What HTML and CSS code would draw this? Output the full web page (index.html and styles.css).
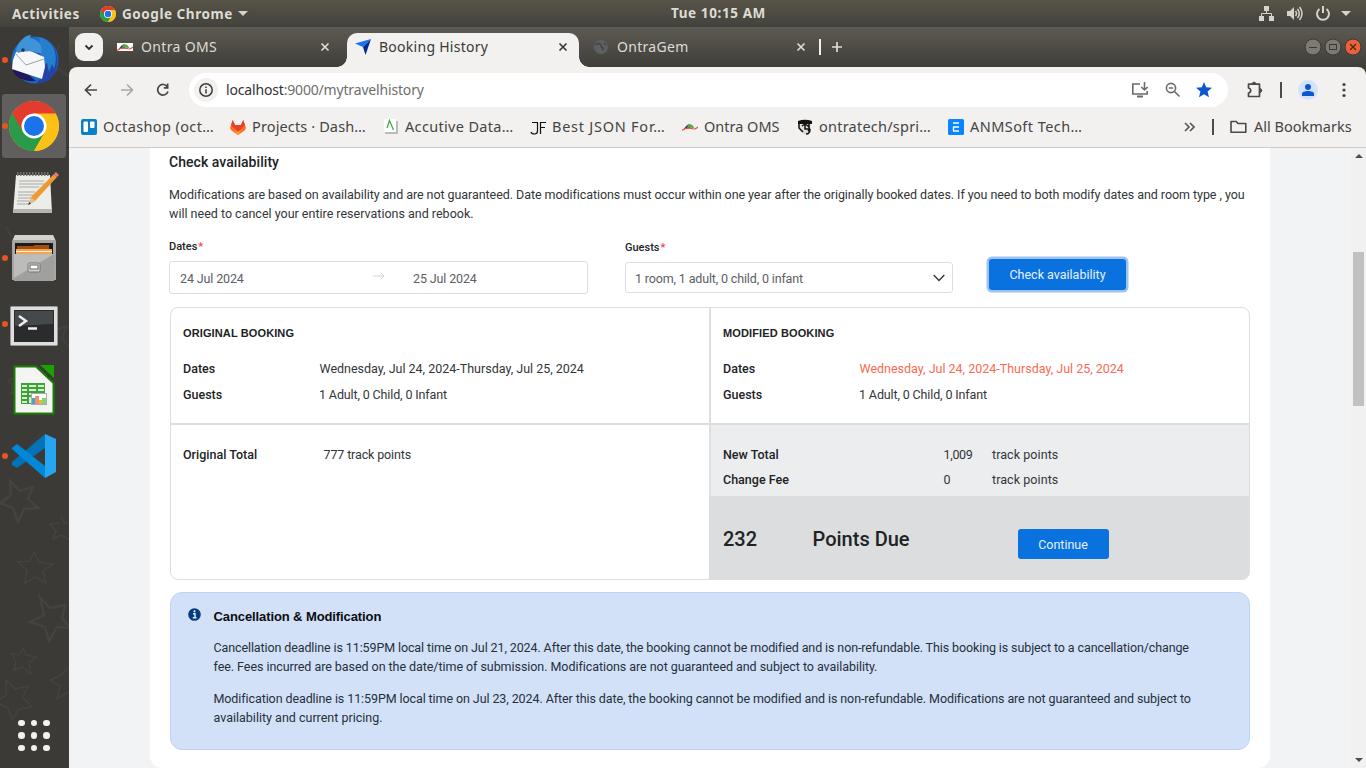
FILE: index.html
```html
<!DOCTYPE html>
<html lang="en">
<head>
<meta charset="utf-8">
<title>Booking History</title>
<link rel="stylesheet" href="styles.css">
</head>
<body>
<svg class="defs" width="0" height="0">
  <defs>
    <symbol id="chrome" viewBox="0 0 50 50">
      <circle cx="25" cy="25" r="25" fill="#fbc116"/>
      <path d="M25 25 3.35 12.5A25 25 0 0 0 25 50L36 31z" fill="#2a9b48"/>
      <path d="M25 25 36 31 25 50A25 25 0 0 0 46.65 12.5H25z" fill="#fbc116"/>
      <path d="M3.35 12.5A25 25 0 0 1 46.65 12.5H25L14.2 31z" fill="#e33b2e"/>
      <circle cx="25" cy="25" r="12.5" fill="#fff"/>
      <circle cx="25" cy="25" r="10" fill="#1a73e8"/>
    </symbol>
    <symbol id="close" viewBox="0 0 10 10"><path d="M1.500 1.500 8.500 8.500M8.500 1.500 1.500 8.500" stroke="currentColor" stroke-width="1.700"/></symbol>
    <symbol id="ontra" viewBox="0 0 16 8">
      <path d="M1 6.500C3 5.500 4 1.200 7.500 1.200L8 5z" fill="#2b3f78"/>
      <path d="M5 4.500C6 0 10 0 12.500 5z" fill="#58a742"/>
      <path d="M0 7.500C4 4 8 5 11 5.800 14 6.500 14.500 5 16 4" fill="none" stroke="#e0524d" stroke-width="1.100"/>
    </symbol>
  </defs>
</svg>

<header class="topbar">
  <span class="activities">Activities</span>
  <svg class="app-icon" width="16" height="16"><use href="#chrome"/></svg>
  <span class="app-name">Google Chrome</span>
  <i class="caret"></i>
  <span class="clock">Tue 10:15 AM</span>
  <span class="tray">
    <svg width="16" height="16" fill="#d6d3cd"><path d="M5 0h5v5H5zM0 10h5v5H0zM10 10h5v5h-5z"/><path d="M7.500 5v3M2.500 10V7.500h10V10" fill="none" stroke="#d6d3cd"/></svg>
    <svg width="16" height="16" fill="none" stroke="#d6d3cd" stroke-width="1.500"><path d="M0 5h3l4-4v13L3 10H0z" fill="#d6d3cd" stroke="none"/><path d="M8.500 5q2 2.500 0 5M10.500 3q3.500 4.500 0 9M12.500 1q5 6.500 0 13"/></svg>
    <svg width="16" height="16" fill="none" stroke="#d6d3cd" stroke-width="2"><path d="M4.500 3a6 6 0 1 0 7 0M8 0v7"/></svg>
    <i class="caret"></i>
  </span>
</header>

<div class="desktop">
  <nav class="dock">
    <svg class="dock-pattern" width="69" height="741" fill="none" stroke="#444340" stroke-width="1.500">
      <path d="m10 454 10 10 13-4-5 12 10 9-14 1-6 13-5-14-13-5 11-8z" stroke-width="2.500"/>
      <path d="m34 525 5 10 14 2-10 7 3 12-11-6-10 6 2-13-9-8 12-1z"/>
      <path d="m40 570 10 11 15-3-3 13 8 10-13-1-8 14-4-14-15-5 14-7z" stroke-width="2.500"/>
      <path d="m23 621 3 7 10 2-7 6 2 11-9-7-8 3 2-8-4-8 8 1z"/>
      <path d="m6 653 9 9 13-3-5 11 9 10-13 2-7 11-4-12-13-6 11-7z"/>
      <path d="m61 489 3 7 8 0M69 512l-8-4-8 4 3-8-6-7 10-1M69 640l-8 8-11 5 10 6-3 13 12-8"/>
      <path d="m19 343 3 8 8 1-5 6 3 9-9-4-8 4 2-8-5-6 8-2zM40 300l11 5 16-6-5 13 8 9M60 17l-4 9-12 3 8 7-3 12 10-6 10 8M6 200l5 9 11 0-7 8 4 11-10-4"/>
    </svg>
    <div class="dock-item running">
      <svg width="50" height="50" viewBox="0 0 50 50">
        <circle cx="26" cy="25" r="23.500" fill="#1a6cc8"/>
        <path d="M36 4C48 9 52 27 45 38L49 33C43 46 34 49 27 48L33 42 20 35z" fill="#2443a8"/>
        <path d="M30 2C45 5 50 20 45 34L43 29 40 37 38 28 33 33z" fill="#257fce"/>
        <path d="M4 34 20 40 27 46C16 47 7 43 4 36z" fill="#21185b"/>
        <path d="M7 17 17 14 35 22 36 32 33 44 3 34 4 25z" fill="#f7f7fa"/>
        <path d="m7 19 10 11 18-6" fill="none" stroke="#99a3b0"/>
        <path d="M7 15C10 4 18 0 22 0L21 3C32 5 34 13 32 19 24 15 15 16 9 18z" fill="#3f93d8"/>
        <circle cx="14" cy="15" r="1.800" fill="#243a4a"/>
      </svg>
    </div>
    <div class="dock-item running current"><svg width="50" height="50"><use href="#chrome"/></svg></div>
    <div class="dock-item editor">
      <svg width="48" height="46" viewBox="0 0 48 46">
        <path d="M4 5h34l2 38H1z" fill="#ecece8"/><path d="M1 39h39v4H1z" fill="#b5b5b1"/>
        <path d="M5 4h32" stroke="#75736f" stroke-width="4" stroke-dasharray="1.500 1.500"/>
        <path d="M7 11h25M7 14h27M7 17h20M6 22h17M6 25h19M6 28h15M5 31h12M5 34h13" stroke="#a8a8a5"/>
        <path d="m16 35 3-8L42 4l3 3-22 24z" fill="#ec9a31"/><path d="m42 4 2-2 3 3-2 2z" fill="#e07c80"/><path d="m16 35 3-8 4 4z" fill="#dcc299"/><path d="m16 35 1.500-3 1.500 1.500z" fill="#333"/>
      </svg>
    </div>
    <div class="dock-item running">
      <svg width="44" height="48" viewBox="0 0 44 48">
        <path d="M3 1h38l3 6v39H0V7z" fill="#a6a6a4"/><path d="M3 1h38l2 5H1z" fill="#d2d2d0"/>
        <path d="M3 9h38v11H3z" fill="#1b1b1b"/><path d="M5 12h16l2-1h14v9H5z" fill="#a34d12"/><path d="M4 15h36v5H4z" fill="#f1a451"/><path d="M4 17.500h36" stroke="#fff0d8"/>
        <path d="M2 20h40v27H2z" fill="#a0a09e"/><path d="M2 20h40L2 44z" fill="#bcbcba"/>
        <rect x="16" y="29" width="12" height="9" rx="1.500" fill="#d2d2d0" stroke="#777"/><rect x="18" y="31" width="8" height="4" fill="#fff" stroke="#666"/>
      </svg>
    </div>
    <div class="dock-item running terminal">
      <svg width="48" height="40" viewBox="0 0 48 40">
        <rect x=".5" y=".5" width="47" height="39" rx="1" fill="#dededc" stroke="#999"/>
        <rect x="4" y="4" width="40" height="32" fill="#292b2c"/><path d="M5 5h38v13L5 20z" fill="#44494b"/>
        <path d="m9 10 7 5-7 5M18 22.500h9" fill="none" stroke="#eee" stroke-width="2.500"/>
      </svg>
    </div>
    <div class="dock-item">
      <svg width="42" height="50" viewBox="0 0 42 50">
        <path d="M1.500 1.500H23L40.500 18v30.500h-39z" fill="#f4f4f3" stroke="#188000" stroke-width="2"/>
        <path d="M27 0h14v13z" fill="#18a303"/>
        <rect x="8" y="18" width="24" height="21" fill="#3da336"/>
        <path d="M9 20h5v2H9zm7 0h7v2h-7zm9 0h6v2h-6zM9 24h5v2H9zm7 0h7v2h-7zm9 0h6v2h-6zM9 28h5v2H9zm7 0h7v2h-7zm9 0h6v2h-6zM9 32h5v2H9zm0 4h5v2H9zm7-4h3v6h-3z" fill="#d7f0d2"/>
        <rect x="18.500" y="28.500" width="15" height="11" fill="#fff" stroke="#aaa"/>
        <path d="M19 33h3v6h-3z" fill="#4b9fdb"/><path d="M22 31h4v8h-4z" fill="#e99370"/><path d="M26 35h3v4h-3z" fill="#edb832"/><path d="M29 33h4v6h-4z" fill="#85d37a"/>
      </svg>
    </div>
    <div class="dock-item running">
      <svg width="44" height="44" viewBox="0 0 44 44">
        <path d="m0 28 33-28v14L5 34 0 31z" fill="#0273b8"/>
        <path d="M0 15v-1l5-4 28 22v12z" fill="#0288d8"/>
        <path d="M33 0l11 5v33l-11 6z" fill="#26a5f1"/>
      </svg>
    </div>
    <div class="apps-grid"><i></i><i></i><i></i><i></i><i></i><i></i><i></i><i></i><i></i></div>
  </nav>

  <div class="browser">
    <div class="tabstrip">
      <button class="tab-search"><svg width="10" height="7"><path d="m1.500 1.500 3.500 3.500 3.500-3.500" fill="none" stroke="#2e2e2c" stroke-width="1.800"/></svg></button>
      <div class="tab tab-first"><svg class="fav boxed" width="16" height="8"><use href="#ontra"/></svg><span class="t-oms">Ontra OMS</span><svg class="x" width="10" height="10"><use href="#close"/></svg></div>
      <div class="tab active"><svg class="fav" width="16" height="16"><path d="M0 4.500 16 0 8 8z" fill="#1673f5"/><path d="M16 0 10.500 16 8 8z" fill="#08298c"/></svg><span class="t-book">Booking History</span><svg class="x" width="10" height="10"><use href="#close"/></svg></div>
      <div class="tab"><svg class="fav" width="16" height="16"><circle cx="8" cy="8" r="7" fill="#5c6065"/><path d="M3 6c2-3 4-1 5 0s-1 2 1 2.500 2 2 0 2.500M11 4l2 2" fill="none" stroke="#45453f" stroke-width="1.600"/></svg><span class="t-gem">OntraGem</span><svg class="x" width="10" height="10"><use href="#close"/></svg></div>
      <i class="tab-sep"></i>
      <svg class="new-tab" width="12" height="12"><path d="M6 1v10M1 6h10" stroke="#dddbd5" stroke-width="1.700"/></svg>
      <div class="win-controls">
        <svg width="18" height="18"><circle cx="9" cy="9" r="8" fill="#7c7a72" stroke="#3a3934"/><path d="M5 9.500h8" stroke="#3a3934"/></svg>
        <svg width="18" height="18"><circle cx="9" cy="9" r="8" fill="#7c7a72" stroke="#3a3934"/><rect x="5.500" y="6.500" width="7" height="5" fill="none" stroke="#3a3934"/></svg>
        <svg width="18" height="18"><circle cx="9" cy="9" r="8" fill="#ed6138" stroke="#3a3934"/><path d="m6 6 6 6m0-6-6 6" stroke="#4a2114" stroke-width="1.200"/></svg>
      </div>
    </div>
    <div class="chrome-ui">
      <div class="toolbar">
        <svg width="14" height="14" class="nav-ico"><path d="M13 7H2M7 1.500 1.500 7 7 12.500" fill="none" stroke="#454543" stroke-width="1.700"/></svg>
        <svg width="14" height="14" class="nav-ico"><path d="M1 7h11M7 1.500 12.500 7 7 12.500" fill="none" stroke="#a9a8a6" stroke-width="1.700"/></svg>
        <svg width="14" height="14" class="nav-ico"><path d="M12 8.500A5.300 5.300 0 1 1 11.500 4" fill="none" stroke="#454543" stroke-width="1.700"/><path d="M12.500.5v5.200H7.800V4h3V.5z" fill="#454543"/></svg>
        <div class="omnibox">
          <span class="site-info"><svg width="14" height="14"><circle cx="7" cy="7" r="6.200" fill="none" stroke="#3c3c3a" stroke-width="1.500"/><path d="M7 6.200v4.300M7 3.500v1.600" stroke="#3c3c3a" stroke-width="1.500"/></svg></span>
          <span class="url"><b>localhost</b>:9000/mytravelhistory</span>
          <span class="omni-icons">
            <svg width="18" height="16" fill="none" stroke="#6c6b6a" stroke-width="1.600"><path d="M9 2H1.800v10h14.400V9"/><path d="M6 14.500h6" stroke-width="2"/><path d="M13.500 0v8M10.300 5l3.200 3 3.200-3"/></svg>
            <svg width="16" height="16" fill="none" stroke="#6c6b6a" stroke-width="1.600"><circle cx="6" cy="6" r="4.600"/><path d="m9.500 9.500 5 5M3.800 6h4.400"/></svg>
            <svg width="16" height="16"><path d="m8 0 2.200 5.300 5.800.5-4.400 3.800L13 15.200 8 12.200 3 15.200l1.400-5.600L0 5.800l5.800-.5z" fill="#0b57d0"/></svg>
          </span>
        </div>
        <svg class="puzzle" width="18" height="18"><path d="M2.500 3.200H13.500V15.500H2.500V12q2.200-.5 2.200-2.500T2.500 7z" fill="none" stroke="#4b4a48" stroke-width="1.700" stroke-linejoin="round"/><path d="M6.200 3a1.800 1.800 0 0 1 3.600 0zM14 7.700a1.800 1.800 0 0 1 0 3.600z" fill="#4b4a48" stroke="#4b4a48"/></svg>
        <i class="bar-sep"></i>
        <svg class="avatar" width="20" height="20"><circle cx="10" cy="10" r="10" fill="#d3e3fd"/><circle cx="10" cy="7" r="3" fill="#0b57d0"/><path d="M4 16v-2.200c0-3.700 12-3.700 12 0V16z" fill="#0b57d0"/></svg>
        <svg class="kebab" width="4" height="16" fill="#444442"><circle cx="2" cy="2.500" r="1.600"/><circle cx="2" cy="8" r="1.600"/><circle cx="2" cy="13.500" r="1.600"/></svg>
      </div>
      <div class="bookmarks">
        <div class="bm bm-1"><svg width="16" height="16"><rect width="16" height="16" rx="2" fill="#0a80c8"/><rect x="2.500" y="2.500" width="4.500" height="10.500" rx="1" fill="#fff"/><rect x="9" y="2.500" width="4.500" height="6.500" rx="1" fill="#fff"/></svg><span>Octashop (oct…</span></div>
        <div class="bm bm-2"><svg width="16" height="16"><path d="M2.800 1 5 6h6l2.200-5L16 9l-1.300 2.500L8 16l-6.700-4.500L0 9z" fill="#fc6d26"/><path d="M2.800 1 5 6h6l2.200-5L15 6 8 13.500 1 6z" fill="#e24329"/><path d="m4 10 4 6 4-6-4 3z" fill="#fca326"/></svg><span>Projects · Dash…</span></div>
        <div class="bm bm-3"><svg width="16" height="16"><path d="M3 2h12v13H2v-2h10V2z" fill="#bbbab7"/><rect x="1" width="12" height="13" fill="#fff"/><path d="M4 9 6.500 1.500 10.500 11" fill="none" stroke="#3faa45" stroke-width="1.300"/></svg><span>Accutive Data…</span></div>
        <div class="bm bm-4"><svg width="16" height="16" fill="none" stroke="#111" stroke-width="1.200"><path d="M2 3.500h5.500V12q0 3-3 3T1 13M10.500 15V3.500H16M10.500 8.500H15"/></svg><span>Best JSON For…</span></div>
        <div class="bm bm-5"><svg width="16" height="8"><use href="#ontra"/></svg><span>Ontra OMS</span></div>
        <div class="bm bm-6"><svg width="16" height="16"><path d="M1 2q7-2.500 14 0v3H1z" fill="#111"/><path d="M2 5.500h12L12.500 14 7 15.500 3 12z" fill="#ddd"/><path d="M2 5v4l4 4M5 7q3-3 6 0t0 5M8 6v4h4M9 15q4 0 4-5M12 4v4" fill="none" stroke="#111" stroke-width="1.500"/></svg><span>ontratech/spri…</span></div>
        <div class="bm bm-7"><svg width="16" height="16"><rect width="16" height="16" rx="1.500" fill="#0a84ff"/><path d="M5 4h6M5 8h6M5 12h6M5.500 8v4" stroke="#fff" stroke-width="1.400" fill="none"/></svg><span>ANMSoft Tech…</span></div>
        <svg class="more" width="11" height="10"><path d="m1 1 4 4-4 4M6 1l4 4-4 4" fill="none" stroke="#555452" stroke-width="1.600"/></svg>
        <i class="bar-sep"></i>
        <div class="bm bm-all"><svg width="17" height="14"><path d="M1 12.200V1.500h5.200l1.800 2h7.800v8.700z" fill="none" stroke="#4b4a48" stroke-width="1.600" stroke-linejoin="round"/></svg><span>All Bookmarks</span></div>
      </div>
    </div>

    <div class="viewport">
      <main class="panel">
        <h1 class="title">Check availability</h1>
        <p class="intro"><span class="l1">Modifications are based on availability and are not guaranteed. Date modifications must occur within one year after the originally booked dates. If you need to both modify dates and room type , you</span><br><span class="l2">will need to cancel your entire reservations and rebook.</span></p>
        <form class="search">
          <div class="field dates">
            <label>Dates<em>*</em></label>
            <div class="input"><span class="from">24 Jul 2024</span><svg width="12" height="8"><path d="M0 4h11M8 1l3 3-3 3" fill="none" stroke="#d2d4d6"/></svg><span class="to">25 Jul 2024</span></div>
          </div>
          <div class="field guests">
            <label>Guests<em>*</em></label>
            <div class="input"><span class="room">1 room, 1 adult, 0 child, 0 infant</span><svg width="12" height="8"><path d="m.7 1 5.300 5.500L11.300 1" fill="none" stroke="#333" stroke-width="1.300"/></svg></div>
          </div>
          <button type="button" class="btn check"><span>Check availability</span></button>
        </form>

        <section class="compare">
          <div class="cell">
            <h2 class="h-orig">ORIGINAL BOOKING</h2>
            <dl class="rows"><dt class="k-dates">Dates</dt><dd class="v-dates">Wednesday, Jul 24, 2024-Thursday, Jul 25, 2024</dd><dt class="k-guests">Guests</dt><dd class="v-guests">1 Adult, 0 Child, 0 Infant</dd></dl>
          </div>
          <div class="cell">
            <h2 class="h-mod">MODIFIED BOOKING</h2>
            <dl class="rows"><dt class="k-dates">Dates</dt><dd class="v-dates changed">Wednesday, Jul 24, 2024-Thursday, Jul 25, 2024</dd><dt class="k-guests">Guests</dt><dd class="v-guests">1 Adult, 0 Child, 0 Infant</dd></dl>
          </div>
          <div class="cell total">
            <dl class="rows"><dt class="k-total">Original Total</dt><dd class="v-points">777 track points</dd></dl>
          </div>
          <div class="cell result">
            <div class="fees">
              <b class="k-new">New Total</b><span class="v-new">1,009</span><span class="unit">track points</span>
              <b class="k-fee">Change Fee</b><span>0</span><span class="unit">track points</span>
            </div>
            <div class="due"><strong class="amount">232</strong><strong class="due-label">Points Due</strong><button type="button" class="btn continue"><span>Continue</span></button></div>
          </div>
        </section>

        <aside class="notice">
          <svg width="13" height="13"><circle cx="6.500" cy="6.500" r="6.300" fill="#053c7d"/><path d="M5 5.700h2v3.800M4.800 9.700h3.700" fill="none" stroke="#e3edfa" stroke-width="1.400"/><circle cx="6.500" cy="3.300" r="1.100" fill="#e3edfa"/></svg>
          <div>
            <h2>Cancellation &amp; Modification</h2>
            <p><span class="n1">Cancellation deadline is 11:59PM local time on Jul 21, 2024. After this date, the booking cannot be modified and is non-refundable. This booking is subject to a cancellation/change</span><br><span class="n2">fee. Fees incurred are based on the date/time of submission. Modifications are not guaranteed and subject to availability.</span></p>
            <p><span class="n3">Modification deadline is 11:59PM local time on Jul 23, 2024. After this date, the booking cannot be modified and is non-refundable. Modifications are not guaranteed and subject to</span><br><span class="n4">availability and current pricing.</span></p>
          </div>
        </aside>
      </main>
      <div class="scrollbar"><i class="up"></i><i class="thumb"></i><i class="down"></i></div>
    </div>
  </div>
</div>
</body>
</html>
```
FILE: styles.css
```css
* { box-sizing: border-box; }
body { margin: 0; width: 1366px; height: 768px; overflow: hidden; font-family: "Noto Sans", sans-serif; font-size: 14px; background: #3b3a37; }
svg { display: block; flex: none; }
i, em { font-style: normal; }
.defs { position: absolute; }

/* system bar */
.topbar { height: 27px; display: flex; align-items: center; background: linear-gradient(#585449, #42413c); color: #dfdbd2; font-size: 13.5px; font-weight: 700; padding: 0 15px 0 12px; white-space: nowrap; }
.activities { width: 88px; letter-spacing: .5px; }
.app-name { margin-left: 6px; width: 111px; letter-spacing: .55px; }
.caret { width: 0; height: 0; border: 5px solid transparent; border-top-color: #d6d3cd; border-bottom: 0; margin-left: 5px; }
.clock { margin-left: 423px; letter-spacing: .6px; padding-bottom: 2px; }
.tray { margin-left: auto; display: flex; align-items: center; gap: 12px; }
.tray .caret { margin-left: -2px; }

.desktop { display: flex; height: 741px; }

/* dock */
.dock { position: relative; width: 69px; display: flex; flex-direction: column; background: #3b3a37; }
.dock-pattern { position: absolute; left: 0; top: 0; }
.dock-item { position: relative; height: 66px; padding-right: 1px; display: flex; align-items: center; justify-content: center; }
.dock-item svg { position: relative; }
.editor { padding: 2px 0 0 2px; }
.terminal { padding-top: 4px; }
.dock-item.current::after { content: ""; position: absolute; left: 2px; top: 1px; width: 64px; height: 64px; border-radius: 3px; background: #605f5d; }
.dock-item.current svg { z-index: 1; }
.dock-item.running::before { content: ""; position: absolute; z-index: 1; left: 2px; top: 30px; width: 6px; height: 6px; border-radius: 50%; background: #e95420; }
.apps-grid { margin: auto 0 17px 18px; display: grid; grid-template-columns: repeat(3, 6.5px); gap: 6px; position: relative; }
.apps-grid i { width: 6.5px; height: 6.5px; border-radius: 50%; background: #f2f1ee; }

/* browser frame */
.browser { width: 1297px; display: flex; flex-direction: column; background: #3f3e39; }
.tabstrip { height: 40px; flex: none; display: flex; align-items: center; padding: 0 4px 0 6px; background: linear-gradient(#5d5a51, #3f3e39); }
.tab-search { width: 28px; height: 28px; border: 0; border-radius: 9px; background: #f2f1f0; display: grid; place-items: center; padding: 0; }
.tab { position: relative; width: 232px; height: 34px; margin-top: 6px; padding: 0 11px 6px 8px; display: flex; align-items: center; color: #dddbd5; white-space: nowrap; }
.tab span { padding-bottom: 2px; }
.t-oms { letter-spacing: .35px; }
.t-book { letter-spacing: .27px; }
.t-gem { letter-spacing: .3px; }
.fav { margin-right: 8px; }
.boxed { background: #fff; }
.x { margin-left: auto; }
.tab-first { margin-left: 6px; width: 238px; padding-right: 17px; }
.active { background: #f2f1f0; color: #3a3936; border-radius: 10px 10px 0 0; }
.active::before, .active::after { content: ""; position: absolute; bottom: 0; width: 10px; height: 10px; }
.active::before { left: -10px; background: radial-gradient(circle at 0 0, transparent 9.5px, #f2f1f0 10px); }
.active::after { right: -10px; background: radial-gradient(circle at 100% 0, transparent 9.5px, #f2f1f0 10px); }
.tab:nth-child(4) { padding-left: 14px; padding-right: 5px; }
.tab-sep { width: 2px; height: 16px; background: #f2f1f0; margin-left: 8px; }
.new-tab { margin-left: 10px; }
.win-controls { margin-left: auto; display: flex; gap: 2px; }

.chrome-ui { flex: none; height: 81px; background: #f2f1f0; border-bottom: 1px solid #cdcccb; border-radius: 8px 8px 0 0; }
.toolbar { height: 46px; display: flex; align-items: center; padding: 0 20px 0 15px; }
.nav-ico { margin-right: 22px; }
.omnibox { width: 1039px; height: 34px; margin-left: -3px; border-radius: 17px; background: #fff; display: flex; align-items: center; padding: 0 16px 0 5px; color: #6f6e6c; }
.site-info { width: 24px; height: 24px; border-radius: 50%; background: #f2f1f0; display: grid; place-items: center; margin-right: 8px; }
.url { letter-spacing: -.17px; padding-bottom: 2px; }
.url b { font-weight: 400; color: #333; }
.omni-icons { margin-left: auto; display: flex; gap: 15.5px; align-items: center; }
.puzzle { margin-left: 18px; }
.bar-sep { width: 2px; height: 16px; background: #4c4b49; }
.toolbar .bar-sep { margin-left: 16px; }
.avatar { margin-left: 16px; }
.kebab { margin-left: auto; }

.bookmarks { height: 28px; display: flex; align-items: center; padding-left: 12px; color: #454442; white-space: nowrap; font-size: 14.5px; }
.bm { display: flex; align-items: center; gap: 6px; }
.bm span { padding-bottom: 2px; }
.bm-1 { width: 149px; letter-spacing: .38px; }
.bm-2 { width: 153px; letter-spacing: .13px; }
.bm-3 { width: 147px; letter-spacing: .33px; }
.bm-4 { width: 152px; letter-spacing: .75px; }
.bm-5 { width: 115px; }
.bm-6 { width: 151px; letter-spacing: .23px; }
.bm-7 { width: 236px; letter-spacing: .44px; }
.bookmarks .bar-sep { margin-left: 17px; }
.bm-all { margin-left: 16px; gap: 7px; }

/* page */
.viewport { flex: 1; display: flex; background: #f2f3f5; font-family: Roboto, sans-serif; font-size: 12.5px; color: #333638; }
.panel { width: 1120px; height: 620px; margin-left: 81px; padding: 0 20px 0 19px; background: #fff; border-radius: 0 0 12px 12px; white-space: nowrap; }
.title { margin: 4px 0 0; font-size: 14px; line-height: 20px; font-weight: 500; color: #202326; letter-spacing: .05px; }
.intro { margin: 13px 0 0; line-height: 19px; }
.l1 { letter-spacing: -.061px; }
.search { display: flex; margin: 14px 0 0; height: 70px; }
.field label { display: block; font-size: 11px; line-height: 18px; padding-top: 1px; font-weight: 500; color: #202326; }
.field em { color: #f0443c; margin-left: 1px; }
.input { display: flex; align-items: center; border: 1px solid #dcdee0; border-radius: 3px; padding-top: 1px; color: #5c6065; }
.dates .input { width: 419px; height: 33px; margin-top: 5px; padding-left: 10px; }
.dates svg { margin-top: -4px; }
.from { width: 193px; }
.from, .to { letter-spacing: -.13px; }
.to { margin-left: 28px; }
.guests { margin-left: 37px; padding-top: 1px; }
.guests .input { width: 328px; height: 31px; margin-top: 5px; padding: 1px 7px 0 9px; justify-content: space-between; }
.room { letter-spacing: -.15px; }
.btn { border: 0; border-radius: 3px; background: #0972de; color: #e7f1fd; font: inherit; padding: 0; }
.check { width: 137px; height: 31px; margin: 22px 0 0 36px; box-shadow: 0 0 0 2.5px #9dc3f2; }

.compare { width: 1080px; height: 273px; margin-left: 1px; border: 1px solid #dcdee0; border-radius: 8px; overflow: hidden; display: grid; grid-template-columns: 538px 538px; grid-template-rows: 115px 154px; gap: 2px; background: #dcdee0; }
.cell { background: #fff; padding: 15px 12px; }
.cell h2 { margin: 0; font: 700 11px/20px "Liberation Sans", sans-serif; letter-spacing: .12px; color: #202326; }
.rows { margin: 13px 0 0; display: grid; grid-template-columns: 136.5px auto; line-height: 26px; }
.rows dt, .fees b { font-weight: 500; color: #202326; }
.rows dd { margin: 0; }
.rows .v-guests { letter-spacing: -.13px; margin-left: -.5px; }
.v-points { letter-spacing: -.13px; }
.rows .changed { color: #fb6a52; }
.total { padding-top: 17px; }
.total .rows { margin: 0; grid-template-columns: 140.5px auto; }
.result { padding: 0; background: #dcddde; }
.fees { height: 71px; padding: 17px 12px 0; background: #ecedef; display: grid; grid-template-columns: 220.5px 48.5px auto; line-height: 25px; align-content: start; }
.v-new { letter-spacing: -.3px; }
.unit { letter-spacing: .07px; }
.due { display: flex; height: 83px; padding-left: 12px; font-size: 20px; font-weight: 500; color: #202326; }
.due strong { font-weight: 500; line-height: 24px; margin-top: 31px; }
.amount { width: 89.5px; }
.due-label { width: 205px; }
.continue { width: 91px; height: 30px; margin-top: 33px; font-size: 12.5px; font-weight: 400; }

.notice { width: 1080px; height: 158px; margin: 12px 0 0 1px; border: 1px solid #bcd4f8; border-radius: 12px; background: #d2e1f8; display: flex; padding: 15px 0 0 17px; gap: 12.5px; color: #26303a; }
.notice h2 { margin: 0; font: 700 13px/18px "Liberation Sans", sans-serif; letter-spacing: -.1px; color: #0b0d10; }
.notice p { margin: 13px 0 0; line-height: 19px; }
.notice h2 + p { margin-top: 12px; }
.n1 { letter-spacing: -.107px; }
.n2 { letter-spacing: -.055px; }
.n3 { letter-spacing: -.09px; }

.scrollbar { width: 15px; margin-left: auto; background: #f1f1f1; display: flex; flex-direction: column; align-items: center; }
.up, .down { width: 0; height: 0; border: 4px solid transparent; }
.up { border-top: 0; border-bottom: 4px solid #4d4d4d; margin-top: 6px; }
.thumb { width: 11px; height: 154px; background: #c1c1c1; margin-top: 94px; }
.down { border-bottom: 0; border-top: 4px solid #4d4d4d; margin: auto 0 6px; }
```
